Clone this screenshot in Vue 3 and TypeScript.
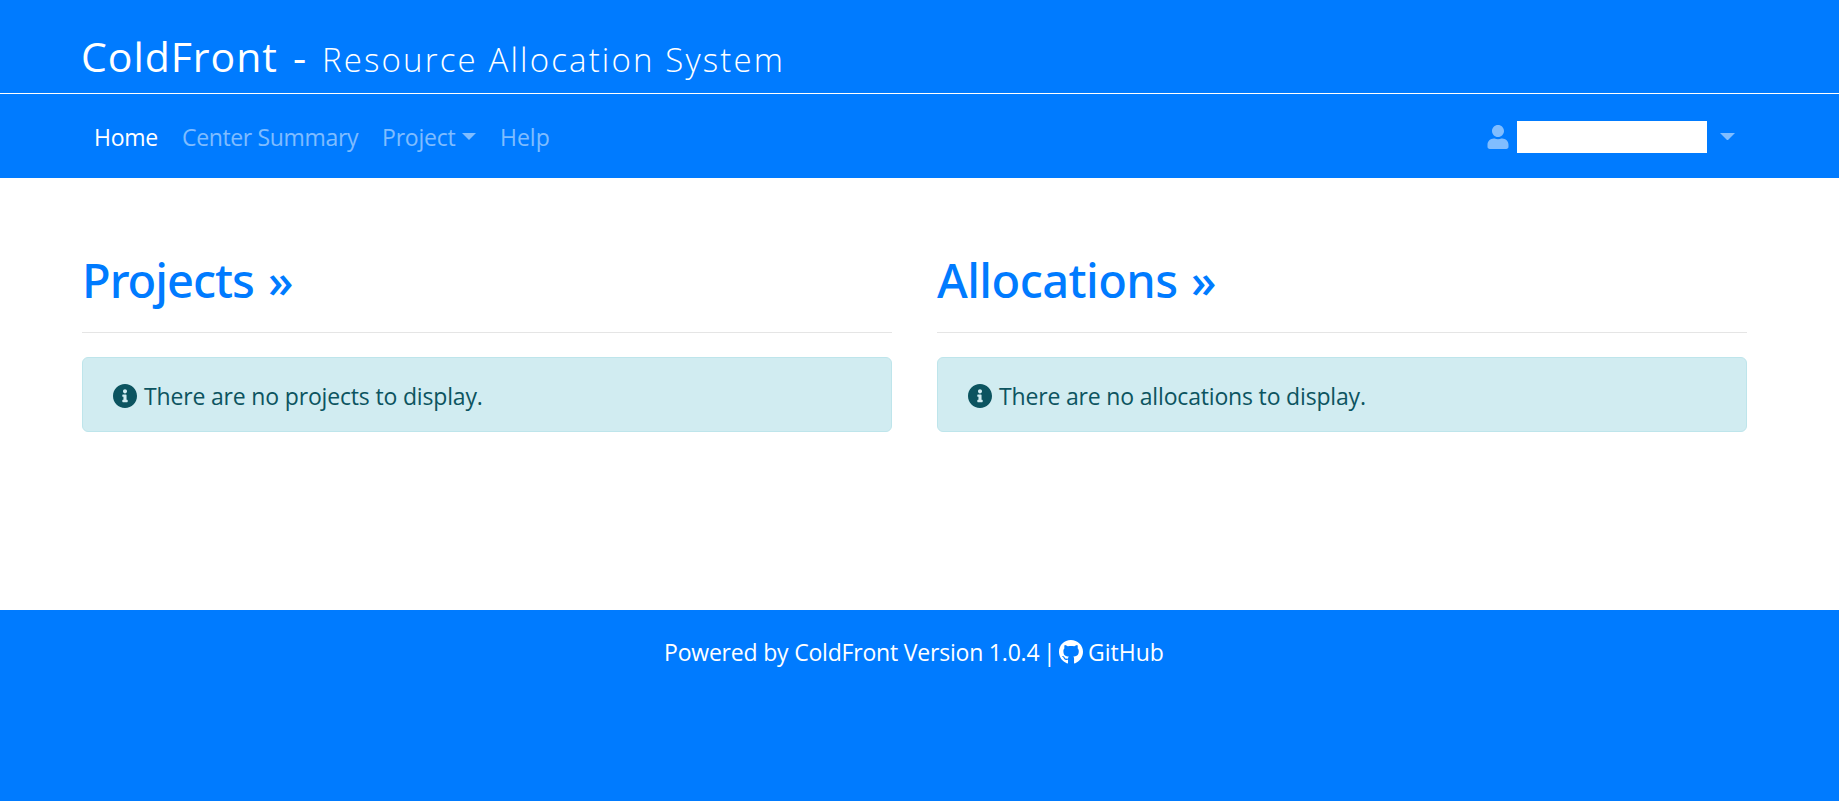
<script setup lang="ts">
interface NavItem {
  key: string
  label: string
  active?: boolean
  dropdown?: boolean
}

interface Panel {
  key: string
  title: string
  message: string
}

const navItems: NavItem[] = [
  { key: 'home', label: 'Home', active: true },
  { key: 'summary', label: 'Center Summary' },
  { key: 'project', label: 'Project', dropdown: true },
  { key: 'help', label: 'Help' },
]

const panels: Panel[] = [
  { key: 'projects', title: 'Projects', message: 'There are no projects to display.' },
  { key: 'allocations', title: 'Allocations', message: 'There are no allocations to display.' },
]
</script>

<template>
  <div class="page">
    <header class="brand">
      <span class="brand-name">ColdFront</span>
      <span class="brand-dash">-</span>
      <span class="brand-sub">Resource Allocation System</span>
    </header>

    <nav class="navbar">
      <ul class="menu">
        <li v-for="item in navItems" :key="item.key" :class="['item', item.key, { active: item.active }]">
          <a><span class="label">{{ item.label }}</span><i v-if="item.dropdown" class="caret"></i></a>
        </li>
      </ul>
      <a class="user">
        <svg class="user-icon" viewBox="0 0 448 512" aria-hidden="true">
          <path d="M224 256c70.7 0 128-57.3 128-128S294.7 0 224 0 96 57.3 96 128s57.3 128 128 128zm89.6 32h-16.7c-22.2 10.2-46.9 16-72.9 16s-50.6-5.8-72.9-16h-16.7C60.2 288 0 348.2 0 422.4V464c0 26.5 21.5 48 48 48h352c26.5 0 48-21.5 48-48v-41.6c0-74.2-60.2-134.4-134.4-134.4z" />
        </svg>
        <span class="user-name"></span>
        <i class="caret"></i>
      </a>
    </nav>

    <main class="columns">
      <section v-for="panel in panels" :key="panel.key" :class="['panel', panel.key]">
        <h2><span class="heading">{{ panel.title }}</span><span class="more">»</span></h2>
        <hr />
        <div class="alert">
          <svg class="info-icon" viewBox="8 8 496 496" aria-hidden="true">
            <path d="M256 8C119.043 8 8 119.083 8 256c0 136.997 111.043 248 248 248s248-111.003 248-248C504 119.083 392.957 8 256 8zm0 110c23.196 0 42 18.804 42 42s-18.804 42-42 42-42-18.804-42-42 18.804-42 42-42zm56 254c0 6.627-5.373 12-12 12h-88c-6.627 0-12-5.373-12-12v-24c0-6.627 5.373-12 12-12h12v-64h-12c-6.627 0-12-5.373-12-12v-24c0-6.627 5.373-12 12-12h64c6.627 0 12 5.373 12 12v100h12c6.627 0 12 5.373 12 12v24z" />
          </svg>
          <span class="message">{{ panel.message }}</span>
        </div>
      </section>
    </main>

    <footer class="footer">
      <span class="powered">Powered by ColdFront Version 1.0.4</span>
      <span class="bar">|</span>
      <svg class="github-icon" viewBox="0 8 496 484" aria-hidden="true">
        <path d="M165.9 397.4c0 2-2.3 3.6-5.2 3.6-3.3.3-5.6-1.3-5.6-3.6 0-2 2.3-3.6 5.2-3.6 3-.3 5.6 1.3 5.6 3.6zm-31.1-4.5c-.7 2 1.3 4.3 4.3 4.9 2.6 1 5.6 0 6.2-2s-1.3-4.3-4.3-5.2c-2.6-.7-5.5.3-6.2 2.3zm44.2-1.7c-2.9.7-4.9 2.6-4.6 4.9.3 2 2.9 3.3 5.9 2.6 2.9-.7 4.9-2.6 4.6-4.6-.3-1.9-3-3.2-5.9-2.9zM244.8 8C106.1 8 0 113.3 0 252c0 110.9 69.8 205.8 169.5 239.2 12.8 2.3 17.3-5.6 17.3-12.1 0-6.2-.3-40.4-.3-61.4 0 0-70 15-84.7-29.8 0 0-11.4-29.1-27.8-36.6 0 0-22.9-15.7 1.6-15.4 0 0 24.9 2 38.6 25.8 21.9 38.6 58.6 27.5 72.9 20.9 2.3-16 8.8-27.1 16-33.7-55.9-6.2-112.3-14.3-112.3-110.5 0-27.5 7.6-41.3 23.6-58.9-2.6-6.5-11.1-33.3 2.6-67.9 20.9-6.5 69 27 69 27 20-5.6 41.5-8.5 62.8-8.5s42.8 2.9 62.8 8.5c0 0 48.1-33.6 69-27 13.7 34.7 5.2 61.4 2.6 67.9 16 17.7 25.8 31.5 25.8 58.9 0 96.5-58.9 104.2-114.8 110.5 9.2 7.9 17 22.9 17 46.4 0 33.7-.3 75.4-.3 83.6 0 6.5 4.6 14.4 17.3 12.1C428.2 457.8 496 362.9 496 252 496 113.3 383.5 8 244.8 8z" />
      </svg>
      <span class="github">GitHub</span>
    </footer>
  </div>
</template>

<style>
body {
  background: #fff;
}
</style>

<style scoped>
.page {
  height: 801px;
  display: flex;
  flex-direction: column;
  overflow: hidden;
  background: #fff;
  font-family: 'Segoe UI', 'Open Sans', 'Noto Sans', sans-serif;
  font-size: 23px;
  line-height: 36px;
  white-space: nowrap;
}

svg {
  display: block;
  flex: none;
  fill: currentColor;
}

/* Brand bar */
.brand {
  box-sizing: border-box;
  height: 94px;
  flex: none;
  display: flex;
  align-items: baseline;
  padding: 24px 0 0 81px;
  border-bottom: 1px solid #fff;
  background: #007bff;
  color: #fff;
  line-height: 64px;
}
.brand-name {
  width: 212px;
  font-size: 41px;
  letter-spacing: 0.95px;
}
.brand-dash {
  width: 29px;
  font-size: 41px;
}
.brand-sub {
  font-size: 33px;
  font-weight: 300;
  letter-spacing: 2.15px;
}

/* Navigation */
.navbar {
  box-sizing: border-box;
  height: 84px;
  flex: none;
  display: flex;
  justify-content: space-between;
  padding: 25px 92px 0 82px;
  background: #007bff;
}
.menu {
  display: flex;
  margin: 0;
  padding: 0;
  list-style: none;
}
.item {
  box-sizing: border-box;
  padding: 0 12px;
  color: rgba(255, 255, 255, 0.5);
}
.item.active {
  color: #fff;
}
.item a {
  display: flex;
}
.home {
  width: 88px;
  letter-spacing: -0.25px;
}
.summary {
  width: 200px;
  letter-spacing: -0.35px;
}
.project {
  width: 118px;
  letter-spacing: -0.2px;
}
.project .label {
  width: 80px;
}
.caret {
  width: 0;
  height: 0;
  flex: none;
  margin-top: 14px;
  border: 7px solid transparent;
  border-top-color: currentColor;
  border-bottom: 0;
}
.user {
  display: flex;
  align-items: flex-start;
  color: rgba(255, 255, 255, 0.5);
}
.user-icon {
  width: 22px;
  height: 24px;
  margin-top: 6px;
}
.user-name {
  width: 190px;
  height: 32px;
  margin: 2px 13px 0 8px;
  background: #fff;
}
.user .caret {
  width: 1px;
  margin-right: 12px;
}

/* Content */
.columns {
  height: 432px;
  flex: none;
  box-sizing: border-box;
  display: grid;
  grid-template-columns: 810px 810px;
  column-gap: 45px;
  padding: 73px 0 0 82px;
}
h2 {
  display: flex;
  align-items: baseline;
  height: 58px;
  margin: 0;
  font-family: 'Segoe UI', 'Noto Sans', sans-serif;
  font-size: 47px;
  font-weight: 500;
  line-height: 58px;
  color: #007bff;
}
.heading {
  width: 186px;
  letter-spacing: -1px;
}
.allocations .heading {
  width: 254px;
  letter-spacing: -0.55px;
}
hr {
  height: 1px;
  margin: 23px 0 24px;
  border: 0;
  background: #e5e5e5;
}
.alert {
  box-sizing: border-box;
  height: 75px;
  display: flex;
  align-items: flex-start;
  padding: 20px 30px 0;
  border: 1px solid #bee5eb;
  border-radius: 6px;
  background: #d1ecf1;
  color: #0c5460;
}
.info-icon {
  width: 24px;
  height: 24px;
  margin: 6px 7px 0 0;
}
.message {
  letter-spacing: -0.17px;
}

/* Footer */
.footer {
  flex: 1;
  display: flex;
  align-items: flex-start;
  padding: 24px 0 0 664px;
  background: #007bff;
  color: #fff;
}
.powered {
  width: 379px;
  letter-spacing: -0.2px;
}
.bar {
  width: 16px;
}
.github-icon {
  width: 24px;
  height: 23.5px;
  margin: 6px 5px 0 0;
}
.github {
  letter-spacing: 0;
}
</style>
